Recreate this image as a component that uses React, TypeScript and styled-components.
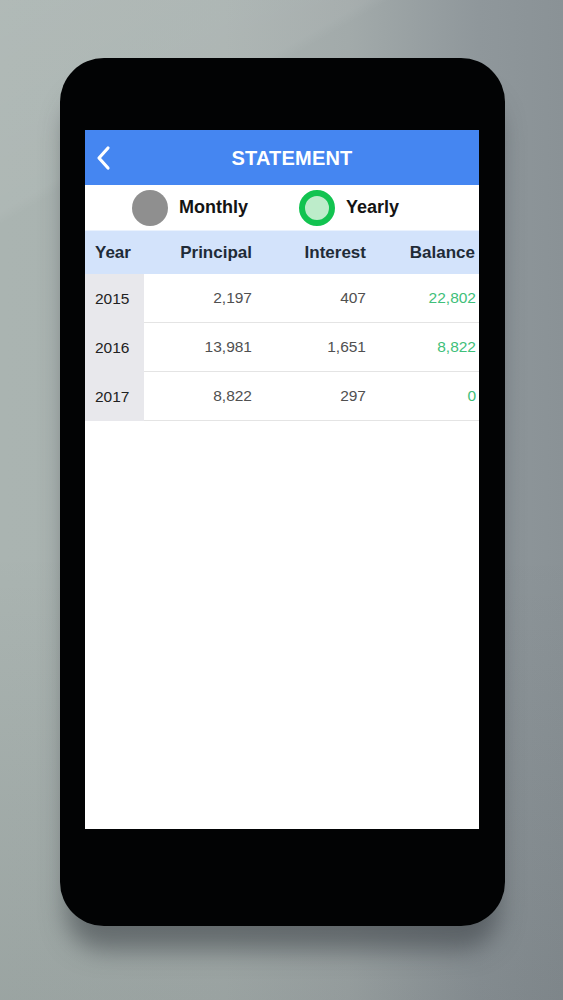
import React from "react";
import styled, { createGlobalStyle } from "styled-components";

const Global = createGlobalStyle`
  html, body { margin: 0; padding: 0; }
  body { font-family: "Liberation Sans", Arial, sans-serif; }
`;

const Page = styled.div`
  width: 563px;
  height: 1000px;
  overflow: hidden;
  display: flex;
  justify-content: flex-start;
  padding: 58px 0 0 60px;
  box-sizing: border-box;
  background:
    linear-gradient(150deg, rgba(255,255,255,0.08) 0%, rgba(255,255,255,0.05) 16%, rgba(255,255,255,0) 17%),
    linear-gradient(180deg, rgba(0,0,0,0) 0%, rgba(0,0,0,0) 55%, rgba(20,25,30,0.10) 100%),
    linear-gradient(90deg, #aab4b1 0%, #a9b2b0 40%, #a2aaaa 62%, #8f979b 85%, #8a9296 100%);
`;

const Phone = styled.div`
  width: 445px;
  height: 868px;
  border-radius: 44px;
  background: #020304;
  box-sizing: border-box;
  padding: 72px 26px 97px 25px;
  box-shadow: 0 30px 24px -6px rgba(55, 60, 66, 0.55);
`;

const Screen = styled.div`
  width: 100%;
  height: 100%;
  background: #ffffff;
  display: flex;
  flex-direction: column;
`;

const Header = styled.div`
  height: 55px;
  background: #4586f1;
  display: flex;
  align-items: center;
  justify-content: center;
  padding-left: 20px;
  position: relative;
`;

const Back = styled.button`
  position: absolute;
  left: 10px;
  top: 15px;
  width: 18px;
  height: 26px;
  padding: 0;
  border: 0;
  background: none;
  display: flex;
`;

const Title = styled.div`
  color: #ffffff;
  font-size: 20px;
  font-weight: 700;
  letter-spacing: 0.2px;
  margin-top: 2px;
`;

const Toggle = styled.div`
  height: 45px;
  display: flex;
  align-items: center;
  padding-left: 47px;
`;

const Option = styled.div<{ $gap: number }>`
  display: flex;
  align-items: center;
  gap: 11px;
  margin-right: ${(p) => p.$gap}px;
`;

const Radio = styled.div<{ $on?: boolean }>`
  width: 36px;
  height: 36px;
  border-radius: 50%;
  box-sizing: border-box;
  background: ${(p) => (p.$on ? "#bdecca" : "#8f8f8f")};
  border: ${(p) => (p.$on ? "6px solid #12c350" : "none")};
`;

const OptionLabel = styled.span`
  font-size: 18px;
  font-weight: 700;
  color: #141414;
`;

const Grid = styled.div`
  display: grid;
  grid-template-columns: 59px 109px 114px 1fr;
`;

const HeadCell = styled.div<{ $left?: boolean; $pad?: number }>`
  height: 43px;
  background: #d3e3fb;
  display: flex;
  align-items: center;
  justify-content: ${(p) => (p.$left ? "flex-start" : "flex-end")};
  padding: ${(p) => (p.$left ? "0 0 0 10px" : `0 ${p.$pad ?? 1}px 0 0`)};
  font-size: 17px;
  font-weight: 600;
  color: #1f2b37;
  border-top: 1px solid #eaf2fd;
`;

const YearCell = styled.div`
  height: 49px;
  background: #e8e8ec;
  display: flex;
  align-items: center;
  padding-left: 10px;
  font-size: 15.5px;
  color: #222;
  box-sizing: border-box;
`;

const NumCell = styled.div<{ $green?: boolean; $pad: number }>`
  height: 49px;
  box-sizing: border-box;
  display: flex;
  align-items: center;
  justify-content: flex-end;
  padding-right: ${(p) => p.$pad}px;
  font-size: 15.5px;
  color: ${(p) => (p.$green ? "#3fc07a" : "#505050")};
  border-bottom: 1px solid #e4e4e4;
`;

const rows = [
  ["2015", "2,197", "407", "22,802"],
  ["2016", "13,981", "1,651", "8,822"],
  ["2017", "8,822", "297", "0"],
];

export default function App() {
  return (
    <>
      <Global />
      <Page>
        <Phone>
          <Screen>
            <Header>
              <Back aria-label="back">
                <svg width="18" height="26" viewBox="0 0 18 26">
                  <path d="M13 3 L4 13 L13 23" fill="none" stroke="#fff" strokeWidth="3.2" strokeLinecap="round" strokeLinejoin="round" />
                </svg>
              </Back>
              <Title>STATEMENT</Title>
            </Header>
            <Toggle>
              <Option $gap={51}>
                <Radio />
                <OptionLabel>Monthly</OptionLabel>
              </Option>
              <Option $gap={0}>
                <Radio $on />
                <OptionLabel>Yearly</OptionLabel>
              </Option>
            </Toggle>
            <Grid>
              <HeadCell $left>Year</HeadCell>
              <HeadCell>Principal</HeadCell>
              <HeadCell>Interest</HeadCell>
              <HeadCell $pad={4}>Balance</HeadCell>
              {rows.map((r) => (
                <React.Fragment key={r[0]}>
                  <YearCell>{r[0]}</YearCell>
                  <NumCell $pad={1}>{r[1]}</NumCell>
                  <NumCell $pad={1}>{r[2]}</NumCell>
                  <NumCell $pad={3} $green>{r[3]}</NumCell>
                </React.Fragment>
              ))}
            </Grid>
          </Screen>
        </Phone>
      </Page>
    </>
  );
}
